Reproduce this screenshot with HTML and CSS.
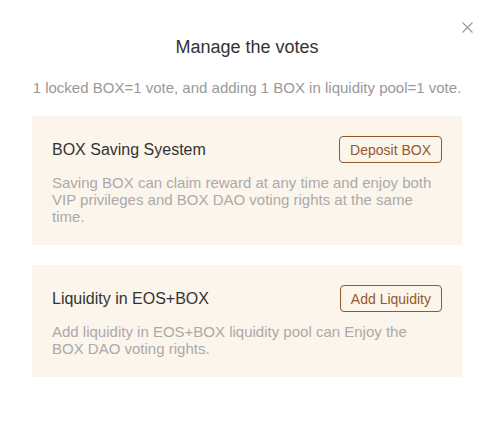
FILE: index.html
```html
<!DOCTYPE html>
<html lang="en">
  <head>
    <meta charset="UTF-8" />
    <title>Manage the votes</title>
    <link rel="stylesheet" href="styles.css">
  </head>
  <body>
    <section class="dialog">
      <button class="close" aria-label="close">
        <svg width="11" height="11" viewBox="0 0 11 11">
          <path d="M0.5 0.5 L10.5 10.5 M10.5 0.5 L0.5 10.5" stroke="#999" stroke-width="1.1" fill="none" />
        </svg>
      </button>
      <h3 class="title">Manage the votes</h3>
      <p class="tip">1 locked BOX=1 vote, and adding 1 BOX in liquidity pool=1 vote.</p>

      <div class="card">
        <div class="card-head">
          <span class="card-name">BOX Saving Syestem</span>
          <button class="btn">Deposit BOX</button>
        </div>
        <p class="card-desc">Saving BOX can claim reward at any time and enjoy both VIP privileges and BOX DAO voting rights at the same time.</p>
      </div>

      <div class="card">
        <div class="card-head">
          <span class="card-name">Liquidity in EOS+BOX</span>
          <button class="btn">Add Liquidity</button>
        </div>
        <p class="card-desc">Add liquidity in EOS+BOX liquidity pool can Enjoy the BOX DAO voting rights.</p>
      </div>
    </section>
  </body>
</html>
```

FILE: styles.css
```css
body {
  margin: 0;
  background: #fff;
  font-family: "Liberation Sans", Arial, sans-serif;
}
.dialog {
  position: relative;
  width: 430px;
  padding: 37px 29px 40px 32px;
}
.close {
  position: absolute;
  top: 22px;
  right: 18px;
  padding: 0;
  border: 0;
  background: none;
  line-height: 0;
  cursor: pointer;
}
.title {
  margin: 0;
  font-size: 18px;
  font-weight: normal;
  line-height: 20px;
  color: #333;
  text-align: center;
}
.tip {
  margin: 22px 0 0;
  font-size: 15px;
  line-height: 18px;
  color: #999;
  text-align: center;
}
.card {
  margin-top: 19px;
  padding: 20px;
  background-color: #fcf5ec;
}
.card + .card {
  margin-top: 20px;
}
.card-head {
  display: flex;
  justify-content: space-between;
  align-items: center;
}
.card-name {
  font-size: 16px;
  color: #333;
}
.btn {
  height: 27px;
  padding: 0 10px;
  border: 1px solid #94592b;
  border-radius: 4px;
  background: none;
  font-family: inherit;
  font-size: 14px;
  color: #94592b;
  cursor: pointer;
}
.card-desc {
  margin: 11px 0 0;
  font-size: 15px;
  line-height: 17px;
  color: #aaa;
}
```
